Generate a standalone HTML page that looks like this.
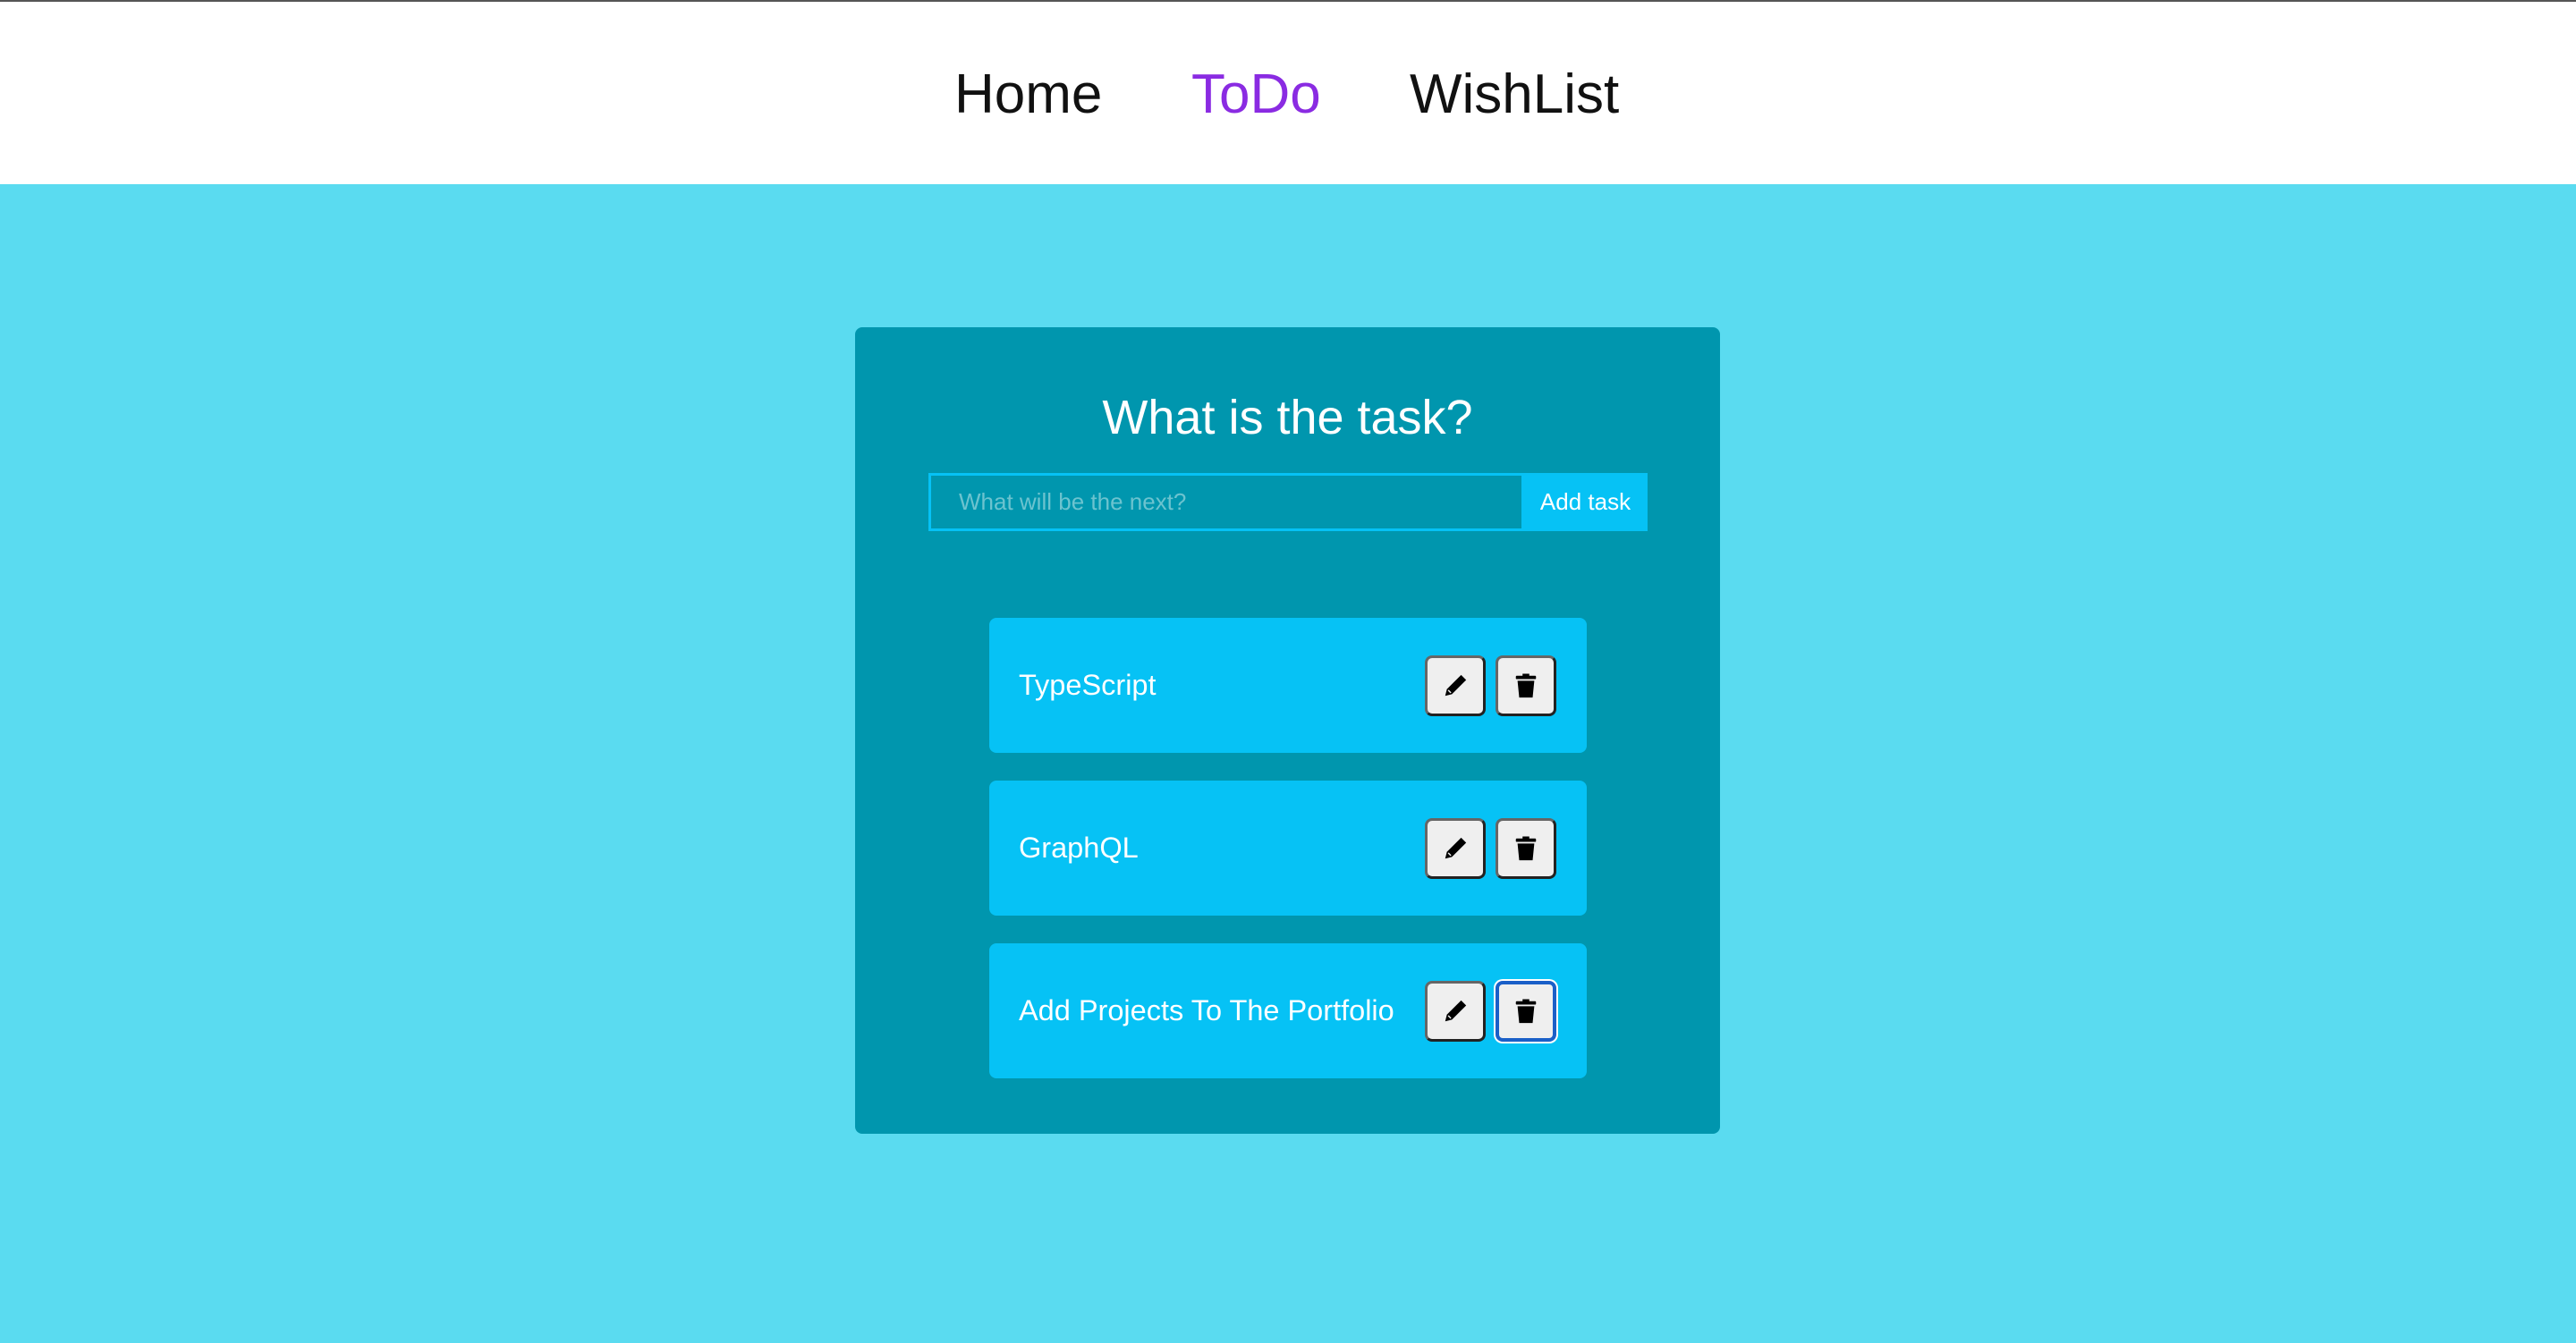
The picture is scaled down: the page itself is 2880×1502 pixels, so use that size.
<!DOCTYPE html>
<html><head><meta charset="utf-8"><style>
*{box-sizing:border-box;margin:0;padding:0}
html,body{width:2880px;height:1502px;overflow:hidden;font-family:"Liberation Sans",Arial,sans-serif}
body{background:#5adbf0;position:relative}
.top{position:absolute;left:0;top:0;width:2880px;height:2px;background:#555}
.hdr{position:absolute;left:0;top:2px;width:2880px;height:204px;background:#fff}
.nav{position:absolute;top:68px;font-size:62px;line-height:72px;color:#111}
.card{position:absolute;left:956px;top:366px;width:967px;height:902px;background:#0096ae;border-radius:8px}
h1{position:absolute;left:0;width:100%;top:66px;text-align:center;color:#fff;font-weight:400;font-size:54px;line-height:70px}
.inp{position:absolute;left:82px;top:163px;width:666px;height:65px;border:3px solid #06c2f5;color:#6cc3cf;font-size:26px;line-height:59px;padding-left:31px}
.btn{position:absolute;left:747px;top:163px;width:139px;height:65px;background:#06c2f5;color:#fff;font-size:26px;line-height:65px;text-align:center}
.item{position:absolute;left:150px;width:668px;height:151px;background:#06c2f5;border-radius:8px}
.item span{position:absolute;left:33px;top:0;line-height:151px;color:#fff;font-size:32.5px}
.b{position:absolute;top:42px;width:68px;height:68px;background:#efefef;border:3px solid #222;border-top-color:#666;border-left-color:#666;border-radius:8px;display:flex;align-items:center;justify-content:center}
.e{left:487px}.d{left:566px}
.sel{border:4px solid #1a5fc8;box-shadow:0 0 0 2px #fff}
</style></head><body>
<div class="top"></div>
<div class="hdr">
<div class="nav" style="left:1067px">Home</div>
<div class="nav" style="left:1332px;color:#8a2be2">ToDo</div>
<div class="nav" style="left:1576px">WishList</div>
</div>
<div class="card">
<h1>What is the task?</h1>
<div class="inp">What will be the next?</div>
<div class="btn">Add task</div>
<div class="item" style="top:325px"><span>TypeScript</span>
<div class="b e"><svg width="30" height="30" viewBox="0 0 16 16"><path d="M11.5 1.5l3 3L6 13l-4 1 1-4z" fill="#000"/><path d="M3.8 10.6l1.6 1.6" stroke="#efefef" stroke-width="0.8"/></svg></div>
<div class="b d"><svg width="28" height="30" viewBox="0 0 14 16"><rect x="1" y="2" width="12" height="2" rx="0.5"/><rect x="5" y="0.8" width="4" height="2"/><path d="M2 5h10l-1 10H3z"/></svg></div></div>
<div class="item" style="top:507px"><span>GraphQL</span>
<div class="b e"><svg width="30" height="30" viewBox="0 0 16 16"><path d="M11.5 1.5l3 3L6 13l-4 1 1-4z" fill="#000"/><path d="M3.8 10.6l1.6 1.6" stroke="#efefef" stroke-width="0.8"/></svg></div>
<div class="b d"><svg width="28" height="30" viewBox="0 0 14 16"><rect x="1" y="2" width="12" height="2" rx="0.5"/><rect x="5" y="0.8" width="4" height="2"/><path d="M2 5h10l-1 10H3z"/></svg></div></div>
<div class="item" style="top:689px"><span>Add Projects To The Portfolio</span>
<div class="b e"><svg width="30" height="30" viewBox="0 0 16 16"><path d="M11.5 1.5l3 3L6 13l-4 1 1-4z" fill="#000"/><path d="M3.8 10.6l1.6 1.6" stroke="#efefef" stroke-width="0.8"/></svg></div>
<div class="b d sel"><svg width="28" height="30" viewBox="0 0 14 16"><rect x="1" y="2" width="12" height="2" rx="0.5"/><rect x="5" y="0.8" width="4" height="2"/><path d="M2 5h10l-1 10H3z"/></svg></div></div>
</div>
</body></html>
